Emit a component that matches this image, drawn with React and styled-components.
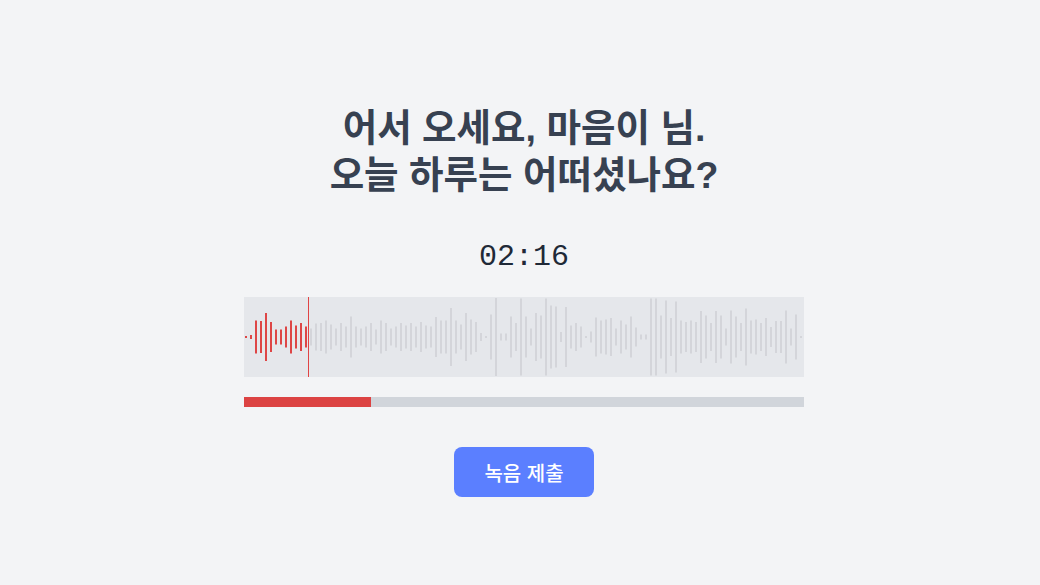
import React from 'react'
import styled, { createGlobalStyle } from 'styled-components'

const GlobalStyle = createGlobalStyle`
  html, body {
    margin: 0;
    padding: 0;
    background: #f3f4f6;
  }
  * { box-sizing: border-box; }
`

const Page = styled.div`
  min-height: 100vh;
  padding: 105px 0 0 8px;
  display: flex;
  flex-direction: column;
  align-items: center;
  font-family: "Liberation Sans", "Noto Sans CJK KR", sans-serif;
`

const Greeting = styled.h1`
  margin: 0;
  font-size: 37.5px;
  line-height: 47px;
  font-weight: 700;
  color: #374151;
  text-align: center;
`

const Timer = styled.div`
  margin-top: 40px;
  font-family: "Liberation Mono", "DejaVu Sans Mono", monospace;
  font-size: 30px;
  line-height: 36px;
  color: #1f2937;
`

const WaveBox = styled.div`
  margin-top: 22px;
  width: 560px;
  height: 80px;
  background: #e5e7eb;
  svg { display: block; }
`

const Track = styled.div`
  margin-top: 20px;
  width: 560px;
  height: 10px;
  background: #d1d5db;
`

const Fill = styled.div`
  height: 100%;
  background: #dc4343;
`

const SubmitButton = styled.button`
  margin-top: 40px;
  width: 140px;
  height: 50px;
  border: none;
  border-radius: 8px;
  background: #5b7fff;
  color: #ffffff;
  font-family: "Liberation Sans", "Noto Sans CJK KR", sans-serif;
  font-size: 20px;
  font-weight: 500;
  cursor: pointer;
`

const heights = [
  2, 4, 33, 32, 48, 30, 15, 15, 21, 33, 23, 28, 21, 17, 27, 28, 33, 25, 17, 28, 21, 41, 21, 17, 21, 28, 15, 33,
  28, 17, 21, 28, 23, 28, 21, 30, 23, 21, 40, 33, 33, 58, 33, 25, 48, 35, 30, 8, 2, 45, 78, 7, 7, 41, 28, 77,
  41, 17, 48, 43, 77, 63, 61, 10, 60, 23, 28, 21, 2, 11, 39, 33, 35, 38, 17, 33, 25, 41, 19, 5, 5, 77, 77, 43,
  73, 38, 71, 33, 30, 33, 30, 52, 43, 28, 52, 43, 17, 53, 41, 28, 57, 33, 35, 28, 38, 20, 32, 32, 53, 17, 45, 2,
]

const CURSOR = 64
const PROGRESS = 22.7

function Waveform() {
  return (
    <WaveBox>
      <svg width="560" height="80" viewBox="0 0 560 80">
        {heights.map((h, i) => {
          const x = 1 + i * 5
          return (
            <rect
              key={i}
              x={x}
              y={40 - h / 2}
              width="2"
              height={h}
              fill={x < CURSOR ? '#de4646' : '#d4d5da'}
            />
          )
        })}
        <rect x={CURSOR} y="0" width="1" height="80" fill="#e04444" />
      </svg>
    </WaveBox>
  )
}

export default function App() {
  return (
    <>
      <GlobalStyle />
      <Page>
        <Greeting>
          어서 오세요, 마음이 님.
          <br />
          오늘 하루는 어떠셨나요?
        </Greeting>
        <Timer>02:16</Timer>
        <Waveform />
        <Track>
          <Fill style={{ width: `${PROGRESS}%` }} />
        </Track>
        <SubmitButton>녹음 제출</SubmitButton>
      </Page>
    </>
  )
}
